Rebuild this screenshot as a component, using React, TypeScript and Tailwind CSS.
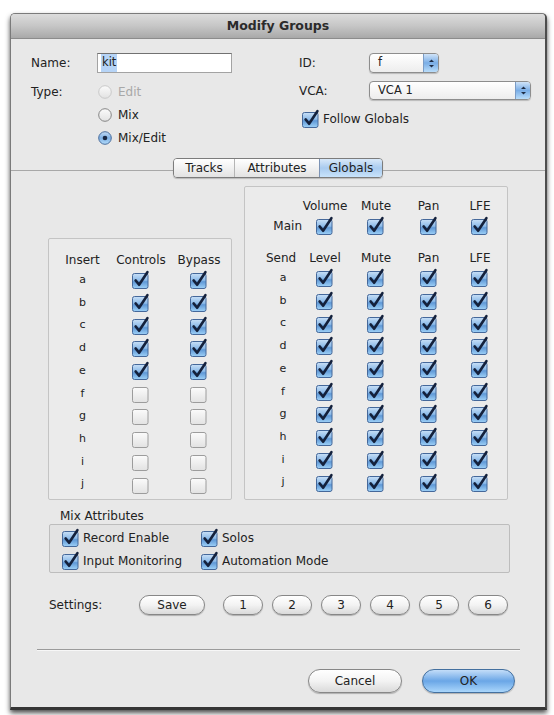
import React from "react";

const letters = ["a", "b", "c", "d", "e", "f", "g", "h", "i", "j"];

function Defs() {
  return (
    <svg width="0" height="0" className="block">
      <defs>
        <linearGradient id="cbOn" x1="0" y1="0" x2="0" y2="1">
          <stop offset="0%" stopColor="#c9e0f7" />
          <stop offset="45%" stopColor="#8dbbe9" />
          <stop offset="55%" stopColor="#5f98d6" />
          <stop offset="100%" stopColor="#9fd2f8" />
        </linearGradient>
        <linearGradient id="cbOff" x1="0" y1="0" x2="0" y2="1">
          <stop offset="0%" stopColor="#fbfbfb" />
          <stop offset="100%" stopColor="#e2e2e2" />
        </linearGradient>
        <linearGradient id="rdOn" x1="0" y1="0" x2="0" y2="1">
          <stop offset="0%" stopColor="#c4dcf5" />
          <stop offset="50%" stopColor="#7fb1e6" />
          <stop offset="100%" stopColor="#b3dcfa" />
        </linearGradient>
      </defs>
    </svg>
  );
}

function Check({ on = true }: { on?: boolean }) {
  return (
    <svg width="18" height="18" viewBox="0 0 18 18" className="block shrink-0 overflow-visible">
      {on ? (
        <>
          <rect x="0.5" y="2.5" width="15.5" height="15" rx="2" fill="url(#cbOn)" stroke="#45689a" />
          <path d="M3.6 9.4 L7.1 13.8 L15.4 1.2" fill="none" stroke="#14213c" strokeWidth="2.6" strokeLinecap="round" strokeLinejoin="round" />
        </>
      ) : (
        <rect x="0.5" y="2.5" width="15.5" height="15" rx="2" fill="url(#cbOff)" stroke="#9c9c9c" />
      )}
    </svg>
  );
}

function Radio({ state }: { state: "off" | "on" | "disabled" }) {
  return (
    <svg width="14" height="14" viewBox="0 0 14 14" className="block shrink-0">
      {state === "on" ? (
        <>
          <circle cx="7" cy="7" r="6.3" fill="url(#rdOn)" stroke="#4a6d9c" />
          <circle cx="7" cy="7" r="2.3" fill="#1a2944" />
        </>
      ) : (
        <circle cx="7" cy="7" r="6.3" fill="url(#cbOff)" stroke={state === "disabled" ? "#c9c9c9" : "#858585"} />
      )}
    </svg>
  );
}

function Select({ value, width }: { value: string; width: string }) {
  return (
    <div className={`${width} h-full flex rounded-[4px] border border-[#8d8d8d] bg-gradient-to-b from-white to-[#ededed] shadow-[0_1px_1px_rgba(0,0,0,0.2)]`}>
      <div className="flex-1 flex items-center pl-[8px] text-[11.5px]">{value}</div>
      <div className="w-[15px] flex items-center justify-center rounded-r-[3px] border-l border-[#7b9cc6] bg-gradient-to-b from-[#cfe3f8] via-[#79ade6] to-[#b9ddfa]">
        <svg width="7" height="11" viewBox="0 0 7 11">
          <path d="M1 4 L3.5 1.5 L6 4 Z" fill="#1e2c44" />
          <path d="M1 7 L3.5 9.5 L6 7 Z" fill="#1e2c44" />
        </svg>
      </div>
    </div>
  );
}

function Pill({ label, width, blue = false }: { label: string; width: string; blue?: boolean }) {
  return (
    <div
      className={`${width} h-full flex items-center justify-center rounded-full border text-[12px] shadow-[0_1px_1px_rgba(0,0,0,0.25)] ${
        blue
          ? "border-[#44709f] bg-gradient-to-b from-[#c3ddf8] via-[#6aa6e6] to-[#aad6fb]"
          : "border-[#878787] bg-gradient-to-b from-white via-[#f3f3f3] to-[#dadada]"
      }`}
    >
      {label}
    </div>
  );
}

export default function App() {
  return (
    <div className="w-[554px] h-[715px] overflow-hidden bg-white pl-[10px] pt-[13px] font-['DejaVu_Sans','Noto_Sans',sans-serif] text-[12px] text-[#222]">
      <Defs />
      <div className="w-[537px] flex flex-col rounded-t-[5px] border border-[#7a7a7a] border-r-2 border-r-[#4d4d4d] border-b-[3px] border-b-[#353535] bg-[#e8e8e8] shadow-[0_3px_5px_rgba(0,0,0,0.7)]">
        {/* title bar */}
        <div className="h-[25px] flex items-center justify-center rounded-t-[4px] border-b border-[#8c8c8c] bg-gradient-to-b from-[#dcdcdc] via-[#c6c6c6] to-[#a9a9a9] text-[12.5px] font-bold text-[#2b2b2b]">
          Modify Groups
        </div>

        {/* name / type / id / vca */}
        <div className="flex items-start pt-[14px] pl-[20px]">
          <div className="w-[268px] flex flex-col">
            <div className="h-[20px] flex items-center">
              <div className="w-[66px]">Name:</div>
              <div className="w-[135px] h-full flex items-center pl-[3px] bg-white border border-[#a3a3a3] border-t-[#717171]">
                <span className="bg-[#b6d4f7] px-[1px] text-[11.5px]">kit</span>
              </div>
            </div>
            <div className="mt-[7px] h-[23px] flex items-center">
              <div className="w-[66px]">Type:</div>
              <div className="ml-[1px] flex items-center gap-[6px] text-[#a8a8a8]">
                <Radio state="disabled" />
                Edit
              </div>
            </div>
            <div className="h-[23px] flex items-center pl-[67px] gap-[6px]">
              <Radio state="off" />
              Mix
            </div>
            <div className="h-[23px] flex items-center pl-[67px] gap-[6px]">
              <Radio state="on" />
              Mix/Edit
            </div>
          </div>

          <div className="flex flex-col">
            <div className="h-[20px] flex items-center">
              <div className="w-[70px]">ID:</div>
              <Select value="f" width="w-[70px]" />
            </div>
            <div className="mt-[8px] h-[19px] flex items-center">
              <div className="w-[70px]">VCA:</div>
              <Select value="VCA 1" width="w-[162px]" />
            </div>
            <div className="mt-[10px] h-[18px] flex items-center gap-[3px] pl-[3px]">
              <Check />
              Follow Globals
            </div>
          </div>
        </div>

        {/* tabs */}
        <div className="mt-[9px] h-[20px] flex items-start">
          <div className="flex-1 mt-[12px] h-px bg-[#a8a8a8]" />
          <div className="h-[20px] flex rounded-[4px] border border-[#7c7c7c] overflow-hidden shadow-[0_1px_1px_rgba(0,0,0,0.2)]">
            <div className="w-[60px] flex items-center justify-center bg-gradient-to-b from-white to-[#e3e3e3]">Tracks</div>
            <div className="w-[85px] flex items-center justify-center border-l border-[#b5b5b5] bg-gradient-to-b from-white to-[#e3e3e3]">Attributes</div>
            <div className="w-[63px] flex items-center justify-center border-l border-[#7c93b5] bg-gradient-to-b from-[#d9e9f9] via-[#a9cbef] to-[#c8e3fb]">Globals</div>
          </div>
          <div className="flex-1 mt-[12px] h-px bg-[#a8a8a8]" />
        </div>

        {/* inserts / sends */}
        <div className="mt-[8px] flex items-start">
          <div className="ml-[37px] mt-[52px] w-[184px] h-[262px] rounded-[2px] border border-[#c4c4c4] bg-[#ebebeb] pt-[12px]">
            <div className="grid grid-cols-[63px_58px_58px] h-[18px] items-center">
              <div className="pl-[4px] text-center">Insert</div>
              <div className="text-center">Controls</div>
              <div className="text-center">Bypass</div>
            </div>
            {letters.map((l, i) => (
              <div key={l} className="grid grid-cols-[63px_58px_58px] h-[22.7px] items-center">
                <div className="pl-[4px] text-center text-[11px]">{l}</div>
                <div className="flex justify-center">
                  <Check on={i < 5} />
                </div>
                <div className="flex justify-center">
                  <Check on={i < 5} />
                </div>
              </div>
            ))}
          </div>

          <div className="ml-[12px] w-[264px] h-[314px] rounded-[2px] border border-[#c4c4c4] bg-[#ebebeb] pt-[10px]">
            <div className="grid grid-cols-[55px_50px_52px_53px_50px] h-[18px] items-center">
              <div />
              <div className="text-center">Volume</div>
              <div className="text-center">Mute</div>
              <div className="text-center">Pan</div>
              <div className="text-center">LFE</div>
            </div>
            <div className="grid grid-cols-[55px_50px_52px_53px_50px] h-[22px] items-center">
              <div className="text-right -mr-[2px]">Main</div>
              {[0, 1, 2, 3].map((c) => (
                <div key={c} className="flex justify-center">
                  <Check />
                </div>
              ))}
            </div>
            <div className="mt-[12px] grid grid-cols-[55px_50px_52px_53px_50px] h-[18px] items-center">
              <div className="pl-[17px] text-center">Send</div>
              <div className="text-center">Level</div>
              <div className="text-center">Mute</div>
              <div className="text-center">Pan</div>
              <div className="text-center">LFE</div>
            </div>
            {letters.map((l) => (
              <div key={l} className="grid grid-cols-[55px_50px_52px_53px_50px] h-[22.7px] items-center">
                <div className="pl-[21px] text-center text-[11px]">{l}</div>
                {[0, 1, 2, 3].map((c) => (
                  <div key={c} className="flex justify-center">
                    <Check />
                  </div>
                ))}
              </div>
            ))}
          </div>
        </div>

        {/* mix attributes */}
        <div className="mt-[8px] ml-[49px] h-[16px] flex items-center">Mix Attributes</div>
        <div className="ml-[38px] w-[461px] h-[49px] flex flex-col rounded-[2px] border border-[#bdbdbd] bg-[#e3e3e3] pt-[2px]">
          <div className="h-[22.5px] flex items-center">
            <div className="w-[151px] pl-[12px] flex items-center gap-[3px]">
              <Check />
              Record Enable
            </div>
            <div className="flex items-center gap-[3px]">
              <Check />
              Solos
            </div>
          </div>
          <div className="h-[22.5px] flex items-center">
            <div className="w-[151px] pl-[12px] flex items-center gap-[3px]">
              <Check />
              Input Monitoring
            </div>
            <div className="flex items-center gap-[3px]">
              <Check />
              Automation Mode
            </div>
          </div>
        </div>

        {/* settings */}
        <div className="mt-[22px] ml-[38px] h-[20px] flex items-center">
          <div className="w-[90px] text-[#1e1e1e]">Settings:</div>
          <Pill label="Save" width="w-[66px]" />
          <div className="ml-[18px] h-full flex gap-[9px]">
            {["1", "2", "3", "4", "5", "6"].map((n) => (
              <Pill key={n} label={n} width="w-[40px]" />
            ))}
          </div>
        </div>

        <div className="mt-[34px] ml-[26px] w-[483px] h-[2px] border-t border-[#9b9b9b] border-b border-b-[#f7f7f7]" />

        <div className="mt-[18px] h-[24px] flex justify-end gap-[20px] pr-[30px]">
          <Pill label="Cancel" width="w-[94px]" />
          <Pill label="OK" width="w-[93px]" blue />
        </div>
        <div className="h-[14px]" />
      </div>
    </div>
  );
}
